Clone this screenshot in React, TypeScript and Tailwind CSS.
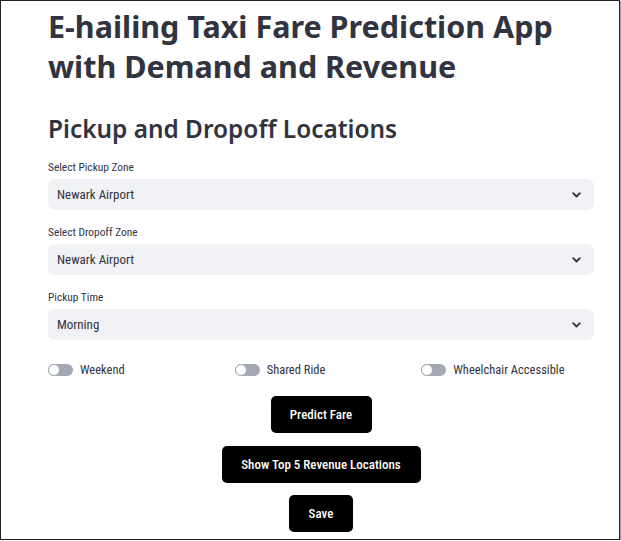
import React from 'react';

const heading = { fontFamily: '"Noto Sans", Lato, sans-serif' };
const body = { fontFamily: '"Roboto Condensed", Roboto, sans-serif' };

function Chevron() {
  return (
    <svg width="9" height="6" viewBox="0 0 9 6" fill="none" stroke="#31333F" strokeWidth="1.8" strokeLinecap="round" strokeLinejoin="round">
      <path d="M1.2 1.2l3.3 3.3 3.3-3.3" />
    </svg>
  );
}

function SelectBox({ label, value }: { label: string; value: string }) {
  return (
    <div className="flex flex-col">
      <span className="text-[11.4px] leading-[14px] text-[#31333F] mb-[5px]">{label}</span>
      <div className="flex items-center justify-between h-[31px] rounded-[7px] bg-[#F0F2F6] pl-[9px] pr-[13px]">
        <span className="text-[13px] text-[#31333F]">{value}</span>
        <Chevron />
      </div>
    </div>
  );
}

function Toggle({ label }: { label: string }) {
  return (
    <div className="flex items-center gap-[7px] h-[16px]">
      <div className="relative w-[25px] h-[12px] rounded-full bg-[#A3A8B4]">
        <div className="absolute left-0 top-0 w-[12px] h-[12px] rounded-full bg-white border border-[#A3A8B4]" />
      </div>
      <span className="text-[12.5px] text-[#31333F]">{label}</span>
    </div>
  );
}

function Btn({ children, className }: { children: React.ReactNode; className?: string }) {
  return (
    <button className={`h-[37px] rounded-[5px] bg-black text-white text-[13px] font-medium ${className ?? ''}`}>
      {children}
    </button>
  );
}

export default function App() {
  return (
    <div className="bg-white" style={body}>
      <div className="w-[620px] h-[540px] border border-[#222] shadow-[1px_1px_0_#9ca3af] overflow-hidden">
        <div className="pl-[47px] pr-[25px] pt-[5px]">
          <h1 className="max-w-[530px] text-[30.5px] leading-[40px] font-bold text-[#31333F]" style={heading}>
            E-hailing Taxi Fare Prediction App with Demand and Revenue
          </h1>
          <h2 className="mt-[27px] text-[24.4px] leading-[32px] font-semibold text-[#31333F]" style={heading}>
            Pickup and Dropoff Locations
          </h2>
          <div className="mt-[15px] flex flex-col gap-[15px]">
            <SelectBox label="Select Pickup Zone" value="Newark Airport" />
            <SelectBox label="Select Dropoff Zone" value="Newark Airport" />
            <SelectBox label="Pickup Time" value="Morning" />
          </div>
          <div className="mt-[22px] grid grid-cols-3 gap-[14px]">
            <Toggle label="Weekend" />
            <Toggle label="Shared Ride" />
            <Toggle label="Wheelchair Accessible" />
          </div>
          <div className="mt-[18px] flex flex-col items-center">
            <Btn className="w-[101px]">Predict Fare</Btn>
            <Btn className="w-[199px] mt-[13px]">Show Top 5 Revenue Locations</Btn>
            <Btn className="w-[64px] mt-[12px]">Save</Btn>
          </div>
        </div>
      </div>
    </div>
  );
}
